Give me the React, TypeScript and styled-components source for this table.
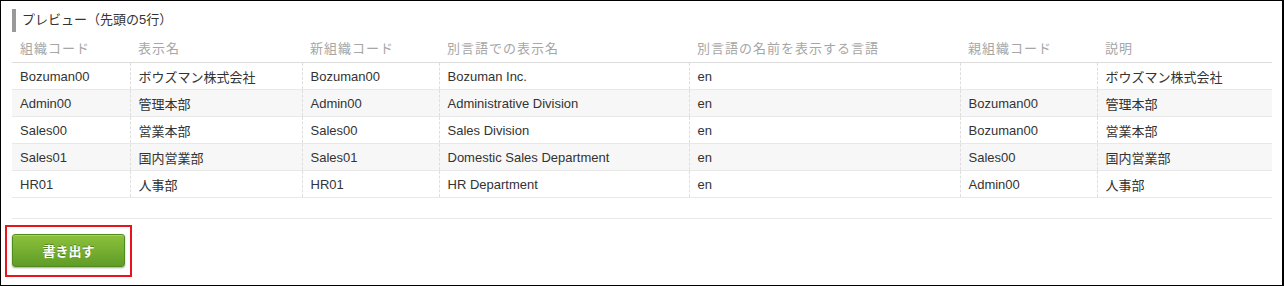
import styled, { createGlobalStyle } from "styled-components";

const GlobalStyle = createGlobalStyle`
    body {
        margin: 0;
        background: #fff;
        font-family: "Liberation Sans", "Noto Sans CJK JP", sans-serif;
    }
`

const columns = [
    { title: "組織コード", width: 118 },
    { title: "表示名", width: 172 },
    { title: "新組織コード", width: 137 },
    { title: "別言語での表示名", width: 250 },
    { title: "別言語の名前を表示する言語", width: 271 },
    { title: "親組織コード", width: 137 },
    { title: "説明", width: 175 },
]

const rows = [
    ["Bozuman00", "ボウズマン株式会社", "Bozuman00", "Bozuman Inc.", "en", "", "ボウズマン株式会社"],
    ["Admin00", "管理本部", "Admin00", "Administrative Division", "en", "Bozuman00", "管理本部"],
    ["Sales00", "営業本部", "Sales00", "Sales Division", "en", "Bozuman00", "営業本部"],
    ["Sales01", "国内営業部", "Sales01", "Domestic Sales Department", "en", "Sales00", "国内営業部"],
    ["HR01", "人事部", "HR01", "HR Department", "en", "Admin00", "人事部"],
]

export default function App() {
    return (
        <>
            <GlobalStyle />
            <Frame>
                <Title>プレビュー（先頭の5行）</Title>
                <Table>
                    <colgroup>
                        {columns.map((c) => (
                            <col key={c.title} style={{ width: c.width }} />
                        ))}
                    </colgroup>
                    <thead>
                        <tr>
                            {columns.map((c) => (
                                <Th key={c.title}>{c.title}</Th>
                            ))}
                        </tr>
                    </thead>
                    <tbody>
                        {rows.map((row, i) => (
                            <Row key={row[0]} $striped={i % 2 === 1}>
                                {row.map((cell, j) => (
                                    <Td key={j}>{cell}</Td>
                                ))}
                            </Row>
                        ))}
                    </tbody>
                </Table>
                <Separator />
                <Footer>
                    <Highlight>
                        <ExportButton>書き出す</ExportButton>
                    </Highlight>
                </Footer>
            </Frame>
        </>
    )
}

const Frame = styled.div`
    box-sizing: border-box;
    width: 1284px;
    height: 286px;
    border: 1px solid #000;
    border-right-width: 2px;
    padding: 8px 10px 0 11px;
    color: #333;
    font-size: 13px;
`

const Title = styled.h3`
    margin: 0;
    height: 23px;
    line-height: 21px;
    border-left: 4px solid #999;
    padding-left: 6px;
    font-size: 13px;
    font-weight: normal;
    color: #333;
`

const Table = styled.table`
    width: 1260px;
    border-collapse: collapse;
    table-layout: fixed;
`

const Th = styled.th`
    height: 30px;
    padding: 0 0 0 8px;
    text-align: left;
    font-weight: normal;
    color: #a6a6a6;
    letter-spacing: 1px;
    border-bottom: 1px solid #dcdcdc;
    white-space: nowrap;
`

const Row = styled.tr<{ $striped: boolean }>`
    background: ${(p) => (p.$striped ? "#f7f7f7" : "#fff")};
    border-bottom: 1px solid #e8e8e8;
`

const Td = styled.td`
    height: 26px;
    padding: 0 0 0 8px;
    color: #333;
    white-space: nowrap;
    & + & {
        border-left: 1px dashed #dedede;
    }
`

const Separator = styled.div`
    width: 1260px;
    margin-top: 20px;
    border-top: 1px solid #e8e8e8;
`

const Footer = styled.div`
    display: flex;
    margin: 6px 0 0 -7px;
`

const Highlight = styled.div`
    border: 2px solid #e8141b;
    padding: 7px 5px 8px;
`

const ExportButton = styled.button`
    box-sizing: border-box;
    width: 113px;
    height: 33px;
    border: 1px solid #4f8a1c;
    border-radius: 3px;
    background: linear-gradient(#8cc13a, #5f9c28);
    box-shadow: 0 1px 2px rgba(0, 0, 0, 0.35), inset 0 1px 0 rgba(255, 255, 255, 0.25);
    color: #fff;
    font-family: "Noto Sans CJK JP", sans-serif;
    font-size: 13px;
    font-weight: bold;
    text-shadow: 0 -1px 0 rgba(0, 0, 0, 0.3);
    cursor: pointer;
`
